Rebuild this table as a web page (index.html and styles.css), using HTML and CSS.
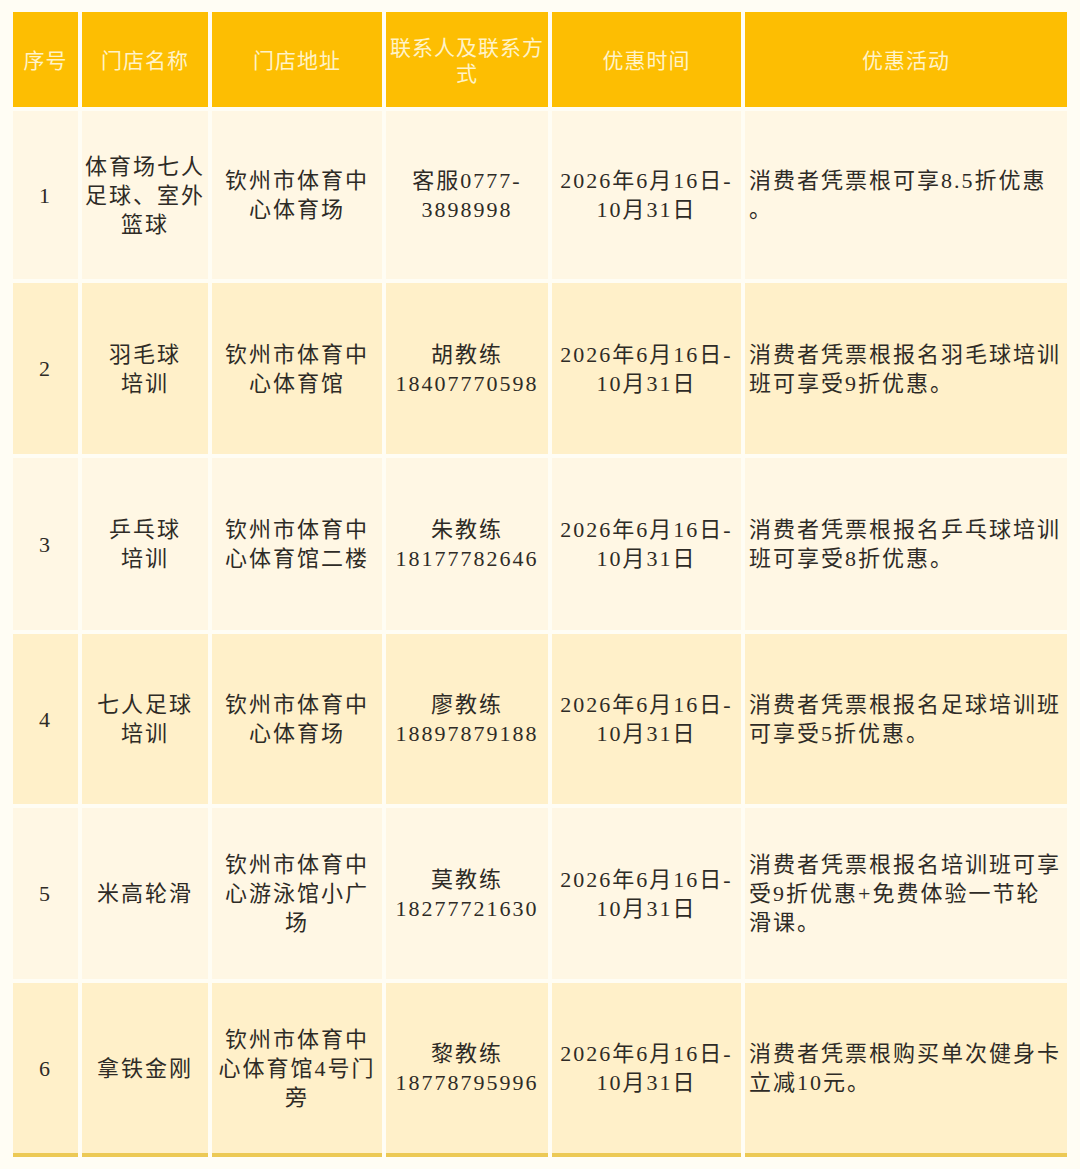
FILE: index.html
```html
<!DOCTYPE html>
<html lang="zh-CN">
<head>
<meta charset="utf-8">
<title>优惠活动</title>
<link rel="stylesheet" href="styles.css">
</head>
<body>
<div class="table">
  <div class="cell head">序号</div>
  <div class="cell head">门店名称</div>
  <div class="cell head">门店地址</div>
  <div class="cell head">联系人及联系方<br>式</div>
  <div class="cell head">优惠时间</div>
  <div class="cell head">优惠活动</div>

  <div class="cell odd">1</div>
  <div class="cell odd">体育场七人<br>足球、室外<br>篮球</div>
  <div class="cell odd">钦州市体育中<br>心体育场</div>
  <div class="cell odd">客服0777-<br>3898998</div>
  <div class="cell odd">2026年6月16日-<br>10月31日</div>
  <div class="cell odd left">消费者凭票根可享8.5折优惠<br>。</div>

  <div class="cell even">2</div>
  <div class="cell even">羽毛球<br>培训</div>
  <div class="cell even">钦州市体育中<br>心体育馆</div>
  <div class="cell even">胡教练<br>18407770598</div>
  <div class="cell even">2026年6月16日-<br>10月31日</div>
  <div class="cell even left">消费者凭票根报名羽毛球培训<br>班可享受9折优惠。</div>

  <div class="cell odd">3</div>
  <div class="cell odd">乒乓球<br>培训</div>
  <div class="cell odd">钦州市体育中<br>心体育馆二楼</div>
  <div class="cell odd">朱教练<br>18177782646</div>
  <div class="cell odd">2026年6月16日-<br>10月31日</div>
  <div class="cell odd left">消费者凭票根报名乒乓球培训<br>班可享受8折优惠。</div>

  <div class="cell even">4</div>
  <div class="cell even">七人足球<br>培训</div>
  <div class="cell even">钦州市体育中<br>心体育场</div>
  <div class="cell even">廖教练<br>18897879188</div>
  <div class="cell even">2026年6月16日-<br>10月31日</div>
  <div class="cell even left">消费者凭票根报名足球培训班<br>可享受5折优惠。</div>

  <div class="cell odd">5</div>
  <div class="cell odd">米高轮滑</div>
  <div class="cell odd">钦州市体育中<br>心游泳馆小广<br>场</div>
  <div class="cell odd">莫教练<br>18277721630</div>
  <div class="cell odd">2026年6月16日-<br>10月31日</div>
  <div class="cell odd left">消费者凭票根报名培训班可享<br>受9折优惠+免费体验一节轮<br>滑课。</div>

  <div class="cell even last">6</div>
  <div class="cell even last">拿铁金刚</div>
  <div class="cell even last">钦州市体育中<br>心体育馆4号门<br>旁</div>
  <div class="cell even last">黎教练<br>18778795996</div>
  <div class="cell even last">2026年6月16日-<br>10月31日</div>
  <div class="cell even last left">消费者凭票根购买单次健身卡<br>立减10元。</div>
</div>
</body>
</html>
```

FILE: styles.css
```css
html, body {
  margin: 0;
  padding: 0;
  background: #fffdf4;
}

body {
  font-family: "Liberation Serif", "Noto Sans CJK SC", serif;
  color: #2e2b26;
}

.table {
  display: grid;
  grid-template-columns: 65px 126px 170px 162px 189px 322px;
  grid-template-rows: 95px 168px 171px 172px 170px 171px 174px;
  column-gap: 4px;
  row-gap: 4px;
  margin: 12px 0 0 13px;
}

.cell {
  display: flex;
  align-items: center;
  justify-content: center;
  text-align: center;
  font-size: 22px;
  line-height: 29px;
  letter-spacing: 2px;
  padding: 0 1px;
}

.head {
  background: #fdbe02;
  color: #fff3c8;
  font-size: 21px;
  line-height: 26px;
  letter-spacing: 1px;
  padding-top: 3px;
}

.odd {
  background: #fff7e4;
}

.even {
  background: #fff0c9;
}

.left {
  justify-content: flex-start;
  text-align: left;
  padding-left: 4px;
}

.last {
  border-bottom: 4px solid #ecc955;
}
```
